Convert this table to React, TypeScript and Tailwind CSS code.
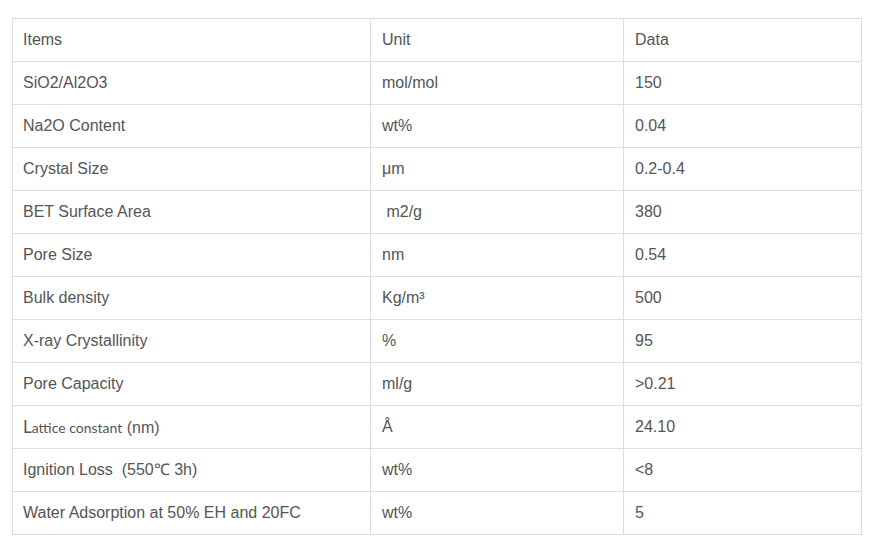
import React from 'react';

type Row = { item: React.ReactNode; unit: React.ReactNode; data: string };

const rows: Row[] = [
  { item: 'Items', unit: 'Unit', data: 'Data' },
  { item: 'SiO2/Al2O3', unit: 'mol/mol', data: '150' },
  { item: 'Na2O Content', unit: 'wt%', data: '0.04' },
  { item: 'Crystal Size', unit: 'μm', data: '0.2-0.4' },
  { item: 'BET Surface Area', unit: '\u00a0m2/g', data: '380' },
  { item: 'Pore Size', unit: 'nm', data: '0.54' },
  { item: 'Bulk density', unit: 'Kg/m³', data: '500' },
  { item: 'X-ray Crystallinity', unit: '%', data: '95' },
  { item: 'Pore Capacity', unit: 'ml/g', data: '>0.21' },
  {
    item: (
      <>
        <span className="font-['Lato',sans-serif]">
          <span className="text-[17px]">L</span>
          <span className="text-[14px]">attice constant</span>
        </span>{' '}
        (nm)
      </>
    ),
    unit: 'Å',
    data: '24.10',
  },
  { item: 'Ignition Loss\u00a0 (550℃ 3h)', unit: 'wt%', data: '<8' },
  { item: 'Water Adsorption at 50% EH and 20FC', unit: 'wt%', data: '5' },
];

export default function App() {
  return (
    <div className="w-[872px] h-[544px] bg-white pt-[18px] pl-[12px] font-['Liberation_Sans',Arial,sans-serif] text-[16px] text-[#555]">
      <table className="w-[850px] border-collapse table-fixed">
        <colgroup>
          <col className="w-[358px]" />
          <col className="w-[253px]" />
          <col className="w-[238px]" />
        </colgroup>
        <tbody>
          {rows.map((r, i) => (
            <tr key={i} className="h-[43px]">
              <td className="border border-[#ddd] px-[10px] align-middle">{r.item}</td>
              <td className="border border-[#ddd] px-[11px] align-middle">{r.unit}</td>
              <td className="border border-[#ddd] px-[11px] align-middle">{r.data}</td>
            </tr>
          ))}
        </tbody>
      </table>
    </div>
  );
}
